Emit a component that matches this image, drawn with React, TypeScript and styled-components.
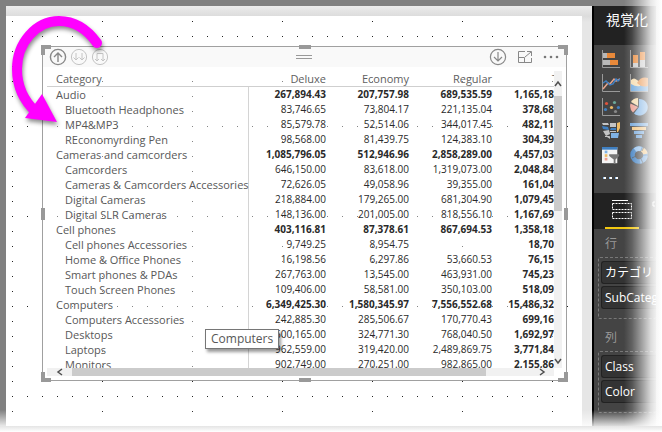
import React from "react";
import styled, { createGlobalStyle } from "styled-components";

const GlobalStyle = createGlobalStyle`
  * { box-sizing: border-box; }
  body { margin: 0; background: #fff; font-family: "Open Sans", "Noto Sans", "Noto Sans CJK JP", sans-serif; }
  button { padding: 0; border: 0; background: none; font: inherit; color: inherit; display: flex; }
  svg { display: block; }
`;

const Page = styled.div`
  position: relative;
  height: 100vh;
  min-height: 300px;
  padding-bottom: 6px;
  overflow: hidden;
`;

const Workspace = styled.div`
  display: flex;
  height: 100%;
  padding: 6px 0 0 6px;
  background: #808080;
`;

const Surface = styled.main`
  flex: 1;
  min-width: 0;
  display: flex;
  padding: 10px 10px 0 0;
  background: linear-gradient(#ececec, #dcdcdc 10px, #e6e6e6 16px);
`;

const Canvas = styled.section`
  flex: 1;
  min-width: 0;
  display: flex;
  padding: 30px 15px 45px 36px;
  background-color: #fff;
  background-image:
    radial-gradient(circle at 0 0, #222 1px, transparent 1px),
    radial-gradient(circle at 0 0, #222 1px, transparent 1px);
  background-size: 15px 90px, 90px 15px;
  background-position: 6px 20px, 6px 5px;
`;

const Visual = styled.article`
  position: relative;
  flex: 1;
  min-width: 0;
  display: flex;
  flex-direction: column;
  gap: 4px;
  border: 1px solid #a0a0a0;
  background: rgba(255, 255, 255, 0.45);
`;

const Toolbar = styled.header`
  display: grid;
  grid-template-columns: 1fr auto 1fr;
  align-items: center;
  height: 20px;
  padding: 0 7px 0 6px;
  background: #f9f9f9;
`;

const ToolGroup = styled.div<{ $end?: boolean }>`
  display: flex;
  align-items: center;
  justify-content: ${(p) => (p.$end ? "flex-end" : "flex-start")};
  gap: ${(p) => (p.$end ? 10 : 3)}px;
`;

const Grip = styled.div`
  width: 16px;
  height: 4px;
  border: solid #999;
  border-width: 1px 0;
`;

type Spot = "tl" | "t" | "tr" | "l" | "r" | "bl" | "b" | "br";
const spots: Record<Spot, string> = {
  tl: "top:-2px; left:-2px; width:10px; height:10px; border-width:4px 0 0 4px;",
  tr: "top:-2px; right:-2px; width:10px; height:10px; border-width:4px 4px 0 0;",
  bl: "bottom:-2px; left:-2px; width:10px; height:10px; border-width:0 0 4px 4px;",
  br: "bottom:-2px; right:-2px; width:10px; height:10px; border-width:0 4px 4px 0;",
  t: "top:-2px; left:calc(50% - 6px); width:12px; height:4px; border-width:2px 0;",
  b: "bottom:-2px; left:calc(50% - 6px); width:12px; height:4px; border-width:2px 0;",
  l: "left:-2px; top:calc(50% - 6px); width:4px; height:12px; border-width:0 2px;",
  r: "right:-2px; top:calc(50% - 6px); width:4px; height:12px; border-width:0 2px;",
};
const Handle = styled.i<{ $at: Spot }>`
  position: absolute;
  border: 0 solid #999;
  ${(p) => spots[p.$at]}
`;

const Body = styled.div`
  flex: 1;
  min-height: 0;
  display: grid;
  grid-template-columns: minmax(0, 1fr) 8px;
  grid-template-rows: minmax(0, 1fr) 8px;
  padding: 0 4px 4px;
`;

const TableClip = styled.div`
  overflow: hidden;
`;

const Table = styled.table`
  width: 100%;
  table-layout: fixed;
  border-collapse: separate;
  border-spacing: 0;
  font-size: 10px;
  line-height: 15px;
  color: #2a2a2a;
`;

const HeadCell = styled.th<{ $kind?: "name" | "total" }>`
  height: 16px;
  padding: ${(p) => (p.$kind === "name" ? "0 0 0 9px" : p.$kind === "total" ? "0 0 0 55px" : "0 5px 0 0")};
  border-bottom: 1px solid #cfcfcf;
  text-align: ${(p) => (p.$kind ? "left" : "right")};
  font-size: 11px;
  font-weight: 400;
  color: #606060;
  white-space: nowrap;
`;

const NameCell = styled.th<{ $child: boolean }>`
  height: 15px;
  padding: 0 0 0 ${(p) => (p.$child ? 18 : 9)}px;
  border-right: 1px solid #d4d4d4;
  text-align: left;
  font-size: 11px;
  font-weight: 400;
  color: #585858;
  white-space: nowrap;
`;

const ValueCell = styled.td<{ $bold?: boolean; $cut?: boolean }>`
  height: 15px;
  padding: 0 ${(p) => (p.$cut ? 0 : 5)}px 0 0;
  text-align: right;
  font-weight: ${(p) => (p.$bold ? 700 : 400)};
`;

const VScroll = styled.div`
  display: grid;
  grid-template-rows: 25px 115fr 144fr 13px;
  background: #f1f1f1;
`;
const HScroll = styled.div`
  display: grid;
  grid-template-columns: 25px 414fr 43fr 25px;
  background: #f1f1f1;
`;
const Thumb = styled.div`
  background: #cbcbcb;
`;
const ScrollButton = styled.button`
  align-items: center;
  justify-content: center;
`;

const Tooltip = styled.div`
  position: absolute;
  left: 162px;
  bottom: 31px;
  height: 20px;
  padding: 0 5px;
  border: 1px solid #767676;
  background: #fff;
  box-shadow: 2px 3px 3px rgba(0, 0, 0, 0.4);
  font-size: 12px;
  line-height: 18px;
  color: #575757;
`;

const Pane = styled.aside`
  flex: none;
  width: 70px;
  display: flex;
  flex-direction: column;
  overflow: hidden;
  padding-right: 6px;
  border-left: 2px solid #000;
  background: #444;
  color: #fff;
`;

const PaneTitle = styled.h2`
  flex: none;
  height: 39px;
  margin: 0;
  padding: 4px 0 0 12px;
  background: #222;
  font-size: 14px;
  font-weight: 400;
  line-height: 20px;
  white-space: nowrap;
`;

const Gallery = styled.div`
  flex: none;
  display: grid;
  grid-template-columns: 18px 18px;
  grid-auto-rows: 18px;
  gap: 6px 10px;
  height: 148px;
  padding: 5px 0 0 8px;
`;

const TabStrip = styled.div`
  flex: none;
  height: 36px;
  display: flex;
  padding-left: 11px;
  background: #222;
`;

const Tab = styled.button`
  width: 36px;
  height: 36px;
  align-items: center;
  justify-content: center;
  && {
    border-bottom: 2px solid #f2c811;
  }
`;

const NextTab = styled.button`
  && {
    padding: 8px 0 0 11px;
  }
`;

const Well = styled.section`
  flex: none;
  display: flex;
  flex-direction: column;
  height: 94px;
`;

const WellTitle = styled.h3`
  margin: 0;
  padding: 5px 0 0 11px;
  height: 28px;
  font-size: 12px;
  line-height: 20px;
  font-weight: 400;
  color: #999;
`;

const Fields = styled.ul`
  list-style: none;
  margin: 0 0 0 4px;
  padding: 3px 0 0 2px;
  height: 62px;
  border: 1px dashed #777;
  border-right: 0;
  border-radius: 2px;
  display: flex;
  flex-direction: column;
  gap: 2px;
`;

const Field = styled.li`
  height: 23px;
  padding-left: 3px;
  border: 1px solid #222;
  border-right: 0;
  border-radius: 3px 0 0 3px;
  background: #333;
  font-size: 12px;
  line-height: 21px;
  white-space: nowrap;
  overflow: hidden;
`;

const FadeRight = styled.div`
  position: absolute;
  inset: 0 0 0 auto;
  width: 38px;
  pointer-events: none;
  background: linear-gradient(
    to right,
    rgba(255, 255, 255, 0),
    rgba(255, 255, 255, 0.16) 8px,
    rgba(255, 255, 255, 0.5) 18px,
    rgba(255, 255, 255, 0.82) 27px,
    rgba(255, 255, 255, 0.92) 32px,
    #f6f6f6 32px,
    #fff 38px
  );
`;

const FadeBottom = styled.div`
  position: absolute;
  inset: auto 0 0 0;
  height: 22px;
  pointer-events: none;
  background: linear-gradient(
    rgba(255, 255, 255, 0),
    rgba(255, 255, 255, 0.4) 8px,
    rgba(255, 255, 255, 0.82) 16px,
    #e4e4e4 16px,
    #fff 22px
  );
`;

const Callout = styled.svg`
  position: absolute;
  left: 0;
  top: 0;
  pointer-events: none;
  filter: drop-shadow(1px 3px 2px rgba(0, 0, 0, 0.45));
`;

type Row = { name: string; child: boolean; values: string[] };
const group = (name: string, ...values: string[]): Row => ({ name, child: false, values });
const item = (name: string, ...values: string[]): Row => ({ name, child: true, values });

const rows: Row[] = [
  group("Audio", "267,894.43", "207,757.98", "689,535.59", "1,165,18"),
  item("Bluetooth Headphones", "83,746.65", "73,804.17", "221,135.04", "378,68"),
  item("MP4&MP3", "85,579.78", "52,514.06", "344,017.45", "482,11"),
  item("REconomyrding Pen", "98,568.00", "81,439.75", "124,383.10", "304,39"),
  group("Cameras and camcorders", "1,085,796.05", "512,946.96", "2,858,289.00", "4,457,03"),
  item("Camcorders", "646,150.00", "83,618.00", "1,319,073.00", "2,048,84"),
  item("Cameras & Camcorders Accessories", "72,626.05", "49,058.96", "39,355.00", "161,04"),
  item("Digital Cameras", "218,884.00", "179,265.00", "681,304.90", "1,079,45"),
  item("Digital SLR Cameras", "148,136.00", "201,005.00", "818,556.10", "1,167,69"),
  group("Cell phones", "403,116.81", "87,378.61", "867,694.53", "1,358,18"),
  item("Cell phones Accessories", "9,749.25", "8,954.75", "", "18,70"),
  item("Home & Office Phones", "16,198.56", "6,297.86", "53,660.53", "76,15"),
  item("Smart phones & PDAs", "267,763.00", "13,545.00", "463,931.00", "745,23"),
  item("Touch Screen Phones", "109,406.00", "58,581.00", "350,103.00", "518,09"),
  group("Computers", "6,349,425.30", "1,580,345.97", "7,556,552.68", "15,486,32"),
  item("Computers Accessories", "242,885.30", "285,506.67", "170,770.43", "699,16"),
  item("Desktops", "600,165.00", "324,771.30", "768,040.50", "1,692,97"),
  item("Laptops", "962,559.00", "319,420.00", "2,489,869.75", "3,771,84"),
  item("Monitors", "902,749.00", "270,251.00", "982,865.00", "2,155,86"),
];

const CircleIcon = ({ d, color, width = 1 }: { d: string; color: string; width?: number }) => (
  <svg width="18" height="18" viewBox="0 0 18 18" fill="none" stroke={color} strokeWidth={width}>
    <circle cx="9" cy="9" r="7.6" />
    <path d={d} />
  </svg>
);

const Chevron = ({ d }: { d: string }) => (
  <svg width="8" height="8" viewBox="0 0 8 8" fill="none" stroke="#505050" strokeWidth="1.5">
    <path d={d} />
  </svg>
);

const Chart = ({ children }: { children: React.ReactNode }) => (
  <svg width="18" height="18" viewBox="0 0 18 18">
    {children}
  </svg>
);

const Axis = () => <path d="M.5 0V17.5H18" fill="none" stroke="#999" />;

const charts: { label: string; art: React.ReactNode }[] = [
  {
    label: "Stacked bar chart",
    art: (
      <>
        <Axis />
        <path d="M1 3h4v5H1zM1 10h7v5H1z" fill="#b8b8b8" />
        <path d="M5 3h8v5H5zM8 10h8v5H8z" fill="#e8893a" />
      </>
    ),
  },
  {
    label: "Stacked column chart",
    art: (
      <>
        <Axis />
        <path d="M3 13h5v4H3zM10 10h5v7h-5z" fill="#c8c8c8" />
        <path d="M3 5h5v8H3zM10 2h5v8h-5z" fill="#e8893a" />
      </>
    ),
  },
  {
    label: "Line chart",
    art: (
      <>
        <Axis />
        <path d="M1 15 6 9l2 1 4-5 2 2 4-2" fill="none" stroke="#e8a48c" strokeWidth="1.5" />
        <path d="M1 9l3-2 4 4 3-1 3-5 2 2 2-2" fill="none" stroke="#3f7fc1" strokeWidth="1.5" />
      </>
    ),
  },
  {
    label: "Area chart",
    art: (
      <>
        <path d="M1 8 5 6l4 4 5-3 4 3v7H1z" fill="#6fa8dc" />
        <path d="M1 6q3-3 6 0l3 2v4q-4 1-9-2z" fill="#f6dcae" />
        <path d="M7 9q4-7 11-5v8q-6 2-11-3z" fill="#e8924a" />
        <Axis />
      </>
    ),
  },
  {
    label: "Scatter chart",
    art: (
      <>
        <Axis />
        <circle cx="4.5" cy="5.5" r="1.6" fill="#e0533d" />
        <circle cx="12.5" cy="4.5" r="1.6" fill="#6aa89a" />
        <circle cx="3.5" cy="11.5" r="1.6" fill="#3f7fc1" />
        <circle cx="9.5" cy="9.5" r="1.6" fill="#eebb66" />
        <circle cx="16.4" cy="9.5" r="1.6" fill="#3f7fc1" />
        <circle cx="13.5" cy="13.5" r="1.6" fill="#888" />
      </>
    ),
  },
  {
    label: "Pie chart",
    art: (
      <>
        <path d="M9 9V1a8.3 8.3 0 1 1-5 14.5z" fill="#7fb2e4" />
        <path d="M8 8V0A8.5 8.5 0 0 0 1 4z" fill="#f4dcae" />
        <path d="M8 9 .5 5.5a9 9 0 0 0 2.5 9z" fill="#eda093" />
      </>
    ),
  },
  {
    label: "Filled map",
    art: (
      <>
        <path d="M0 1h6l1 2H1zM8 1h6v4H8zM1 9l6-1 1 4-4 2zM5 15l3-1v3z" fill="#c4c4c4" />
        <path d="M0 4l6 1 1 3-6-1zM9 6h5v2H8z" fill="#3f7fc1" />
        <path d="M15 1l3-1v6l-2 4h-1z" fill="#eebb66" />
        <path d="M9 11l8 0-1 5H9z" fill="#7fb2e4" />
        <path d="M8 9h6v1H8zM3 14h4v1H3z" fill="#c4c4c4" />
      </>
    ),
  },
  {
    label: "Funnel",
    art: (
      <>
        <path d="M0 1h18v3H0zM4 9h10v3H4zM6 13h6v3H6z" fill="#6fa3d8" />
        <path d="M2 5h14v3H2z" fill="#f2c27a" />
      </>
    ),
  },
  {
    label: "Slicer",
    art: (
      <svg width="20" height="20" viewBox="0 0 20 20">
        <path d="M0 0h17v18H0z" fill="#f4f4f4" />
        <path d="M0 0h17v3H0z" fill="#3f7fc1" />
        <path d="M3 4h3v3H3z" fill="#7fb2e4" />
        <path d="M3 8h3v3H3z" fill="#eebb66" />
        <path d="M3 12h3v3H3z" fill="#eda093" />
        <path d="M8 8h11v2l-4 4v5h-2v-5l-5-4z" fill="#777" />
      </svg>
    ),
  },
  {
    label: "Donut chart",
    art: (
      <g fill="none" strokeWidth="4.5">
        <circle cx="9" cy="9" r="6.5" stroke="#3f7fc1" />
        <path d="M5 4A6.5 6.5 0 0 1 11 3" stroke="#8fbdea" />
        <path d="M12 3.5A6.5 6.5 0 0 1 15.5 8" stroke="#f2c27a" />
        <path d="M15.5 10A6.5 6.5 0 0 1 10 15.5" stroke="#6fa3d8" />
        <path d="M2 12l4-2M11 13l2 4M12 5l2-4" stroke="#444" strokeWidth=".8" />
      </g>
    ),
  },
  {
    label: "More visuals",
    art: (
      <>
        <path d="M1 7h3v2H1zM7 7h3v2H7zM13 7h3v2h-3z" fill="#fff" />
        <path d="M1 7h1v2H1zM7 7h1v2H7zM13 7h1v2h-1z" fill="#8fbdea" />
      </>
    ),
  },
];

const FieldWell = ({ title, fields }: { title: string; fields: string[] }) => (
  <Well>
    <WellTitle>{title}</WellTitle>
    <Fields>
      {fields.map((f) => (
        <Field key={f}>{f}</Field>
      ))}
    </Fields>
  </Well>
);

const Matrix = () => (
  <Table>
    <colgroup>
      <col width="202" />
      <col width="82" />
      <col width="83" />
      <col width="83" />
      <col />
    </colgroup>
    <thead>
      <tr>
        <HeadCell $kind="name">Category</HeadCell>
        <HeadCell>Deluxe</HeadCell>
        <HeadCell>Economy</HeadCell>
        <HeadCell>Regular</HeadCell>
        <HeadCell $kind="total">Total</HeadCell>
      </tr>
    </thead>
    <tbody>
      {rows.map((r) => (
        <tr key={r.name}>
          <NameCell scope="row" $child={r.child}>
            {r.name}
          </NameCell>
          {r.values.map((v, i) => (
            <ValueCell key={i} $bold={!r.child || i === 3} $cut={i === 3}>
              {v}
            </ValueCell>
          ))}
        </tr>
      ))}
    </tbody>
  </Table>
);

export default function App() {
  return (
    <Page>
      <GlobalStyle />
      <Workspace>
        <Surface>
          <Canvas>
            <Visual>
              <Toolbar>
                <ToolGroup>
                  <button aria-label="Drill up">
                    <CircleIcon color="#888" width={1.4} d="M9 14V5M5 9l4-4 4 4" />
                  </button>
                  <button aria-label="Go to the next level">
                    <CircleIcon color="#c4c4c4" d="M6 5v7M3.5 9.5 6 12l2.500-2.500M12 5v7M9.5 9.5 12 12l2.500-2.500" />
                  </button>
                  <button aria-label="Expand all down one level">
                    <CircleIcon color="#c4c4c4" d="M6 13V5.500h6V13M4 11l2 2 2-2M10 11l2 2 2-2" />
                  </button>
                </ToolGroup>
                <Grip />
                <ToolGroup $end>
                  <button aria-label="Drill down">
                    <CircleIcon color="#888" width={1.2} d="M9 4v9M5 9l4 4 4-4" />
                  </button>
                  <button aria-label="Focus mode">
                    <svg width="16" height="14" viewBox="0 0 16 14" fill="none" stroke="#888">
                      <path d="M8 1.500H1.500v11h13V8M1.500 7.500h6v5M8 7l6-5M10 1.500h4.500V6" />
                    </svg>
                  </button>
                  <button aria-label="More options">
                    <svg width="16" height="4" viewBox="0 0 16 4" fill="#777">
                      <circle cx="2" cy="2" r="1.300" />
                      <circle cx="8" cy="2" r="1.300" />
                      <circle cx="14" cy="2" r="1.300" />
                    </svg>
                  </button>
                </ToolGroup>
              </Toolbar>
              <Body>
                <TableClip>
                  <Matrix />
                </TableClip>
                <VScroll>
                  <ScrollButton aria-label="Scroll up">
                    <Chevron d="M1 6l3-4 3 4" />
                  </ScrollButton>
                  <Thumb />
                  <span />
                  <ScrollButton aria-label="Scroll down">
                    <Chevron d="M1 1l3 4 3-4" />
                  </ScrollButton>
                </VScroll>
                <HScroll>
                  <ScrollButton aria-label="Scroll left">
                    <Chevron d="M6 1L2 4l4 3" />
                  </ScrollButton>
                  <Thumb />
                  <span />
                  <ScrollButton aria-label="Scroll right">
                    <Chevron d="M2 1l4 3-4 3" />
                  </ScrollButton>
                </HScroll>
              </Body>
              {(Object.keys(spots) as Spot[]).map((s) => (
                <Handle key={s} $at={s} />
              ))}
              <Tooltip role="tooltip">Computers</Tooltip>
            </Visual>
          </Canvas>
        </Surface>
        <Pane>
          <PaneTitle>視覚化</PaneTitle>
          <Gallery>
            {charts.map((c) => (
              <button key={c.label} aria-label={c.label}>
                {c.label === "Slicer" ? c.art : <Chart>{c.art}</Chart>}
              </button>
            ))}
          </Gallery>
          <TabStrip>
            <Tab aria-label="Fields">
              <svg width="20" height="20" viewBox="0 0 20 20" fill="none" stroke="#fff">
                <path d="M0 .5h16" />
                <path d="M.5 3.500h19v6H.5zM.5 12.500h19v6H.5z" strokeDasharray="2 1" />
              </svg>
            </Tab>
            <NextTab aria-label="Format">
              <svg width="6" height="8" viewBox="0 0 6 8" fill="none" stroke="#fff">
                <path d="M5 1H3v4h2" />
              </svg>
            </NextTab>
          </TabStrip>
          <FieldWell title="行" fields={["カテゴリ", "SubCategory"]} />
          <FieldWell title="列" fields={["Class", "Color"]} />
        </Pane>
      </Workspace>
      <FadeRight />
      <FadeBottom />
      <Callout width="120" height="140" viewBox="0 0 120 140">
        <path
          d="M97 43C87 29 74 21 59 21C36 21 17 43 17 69C17 87 24 101 36 112"
          fill="none"
          stroke="#f0f"
          strokeWidth="10"
          strokeLinecap="round"
        />
        <path d="M42 94L57 122L25 118Z" fill="#f0f" />
      </Callout>
    </Page>
  );
}
